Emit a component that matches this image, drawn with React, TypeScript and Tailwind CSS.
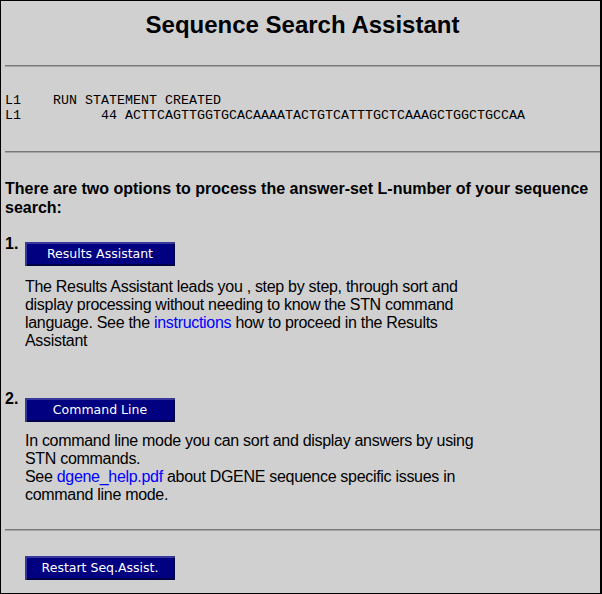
import React from "react";

function NavButton({ label, className = "" }: { label: string; className?: string }) {
  return (
    <button
      type="button"
      className={
        "block w-[150px] h-[24px] bg-[#000080] text-white text-[12.5px] leading-[24px] text-center font-['DejaVu_Sans',Verdana,sans-serif] shadow-[inset_2px_2px_0_rgba(255,255,255,0.22),inset_-2px_-2px_0_rgba(0,0,0,0.45)] " +
        className
      }
    >
      {label}
    </button>
  );
}

function Rule({ className = "" }: { className?: string }) {
  return <div className={"h-[2px] border-t border-b border-t-[#7a7a7a] border-b-[#a6a6a6] " + className} />;
}

export default function App() {
  return (
    <div className="w-[602px] h-[594px] overflow-hidden bg-[#d0d0d0] border-t border-l border-b border-r-2 border-black pl-[4px] font-['Liberation_Sans',Arial,sans-serif] text-black">
      <h1 className="pt-[10px] text-center text-[24px] font-bold leading-[28px]">Sequence Search Assistant</h1>
      <Rule className="mt-[26px]" />
      <pre className="mt-[27px] font-['Liberation_Mono','Courier_New',monospace] text-[13.33px] leading-[14.5px]">
        {"L1    RUN STATEMENT CREATED\nL1          44 ACTTCAGTTGGTGCACAAAATACTGTCATTTGCTCAAAGCTGGCTGCCAA"}
      </pre>
      <Rule className="mt-[28px]" />
      <p className="mt-[26px] text-[16px] font-bold leading-[19px]">
        There are two options to process the answer-set L-number of your sequence search:
      </p>

      <div className="mt-[18px] flex items-start">
        <div className="w-[20px] text-[16px] font-bold leading-[18px]">1.</div>
        <div>
          <NavButton label="Results Assistant" className="mt-[7px]" />
          <p className="mt-[12px] w-[465px] text-[16px] leading-[18px] tracking-[-0.3px]">
            The Results Assistant leads you , step by step, through sort and display processing without needing to
            know the STN command language. See the <a className="text-[#0000ff]">instructions</a> how to proceed in
            the Results Assistant
          </p>
        </div>
      </div>

      <div className="mt-[40px] flex items-start">
        <div className="w-[20px] text-[16px] font-bold leading-[18px]">2.</div>
        <div>
          <NavButton label="Command Line" className="mt-[8px]" />
          <p className="mt-[10px] w-[465px] text-[16px] leading-[18px] tracking-[-0.3px]">
            In command line mode you can sort and display answers by using STN commands.
            <br />
            See <a className="text-[#0000ff]">dgene_help.pdf</a> about DGENE sequence specific issues in command line
            mode.
          </p>
        </div>
      </div>

      <Rule className="mt-[25px]" />
      <NavButton label="Restart Seq.Assist." className="mt-[25px] ml-[20px]" />
    </div>
  );
}
